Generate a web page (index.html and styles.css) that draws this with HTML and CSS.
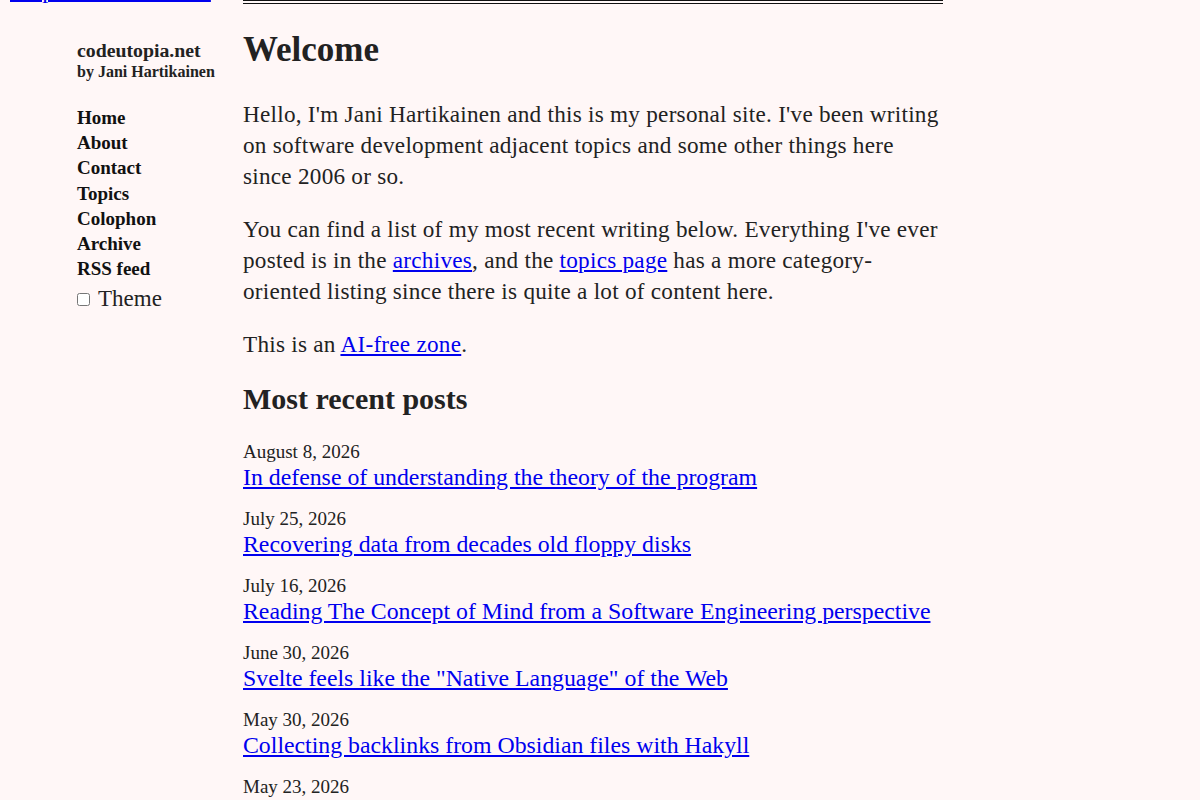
FILE: index.html
```html
<!DOCTYPE html>
<html lang="en">
<head>
<meta charset="utf-8">
<title>codeutopia.net</title>
<link rel="stylesheet" href="styles.css">
</head>
<body>
<a class="skip" href="#main">Skip to main content</a>
<div class="page">
  <aside class="sidebar">
    <div class="brand">
      <div class="site">codeutopia.net</div>
      <div class="by">by Jani Hartikainen</div>
    </div>
    <nav class="nav">
      <a href="#">Home</a>
      <a href="#">About</a>
      <a href="#">Contact</a>
      <a href="#">Topics</a>
      <a href="#">Colophon</a>
      <a href="#">Archive</a>
      <a href="#">RSS feed</a>
    </nav>
    <label class="theme"><input type="checkbox"> Theme</label>
  </aside>
  <main class="main" id="main">
    <h1>Welcome</h1>
    <p>Hello, I'm Jani Hartikainen and this is my personal site. I've been writing on software development adjacent topics and some other things here since 2006 or so.</p>
    <p>You can find a list of my most recent writing below. Everything I've ever posted is in the <a href="#">archives</a>, and the <a href="#">topics page</a> has a more category-oriented listing since there is quite a lot of content here.</p>
    <p>This is an <a href="#">AI-free zone</a>.</p>
    <h2>Most recent posts</h2>
    <ul class="posts">
      <li><div class="date">August 8, 2026</div><a href="#">In defense of understanding the theory of the program</a></li>
      <li><div class="date">July 25, 2026</div><a href="#">Recovering data from decades old floppy disks</a></li>
      <li><div class="date">July 16, 2026</div><a href="#">Reading The Concept of Mind from a Software Engineering perspective</a></li>
      <li><div class="date">June 30, 2026</div><a href="#">Svelte feels like the "Native Language" of the Web</a></li>
      <li><div class="date">May 30, 2026</div><a href="#">Collecting backlinks from Obsidian files with Hakyll</a></li>
      <li><div class="date">May 23, 2026</div><a href="#">Notes</a></li>
    </ul>
  </main>
</div>
</body>
</html>
```

FILE: styles.css
```css
html, body {
  margin: 0;
  padding: 0;
  background: #fff7f7;
  color: #222;
  font-family: "Liberation Serif", "Times New Roman", serif;
}
a { color: #0000ee; }
.skip {
  position: absolute;
  left: 10px;
  top: -21px;
  font-size: 24.2px;
  line-height: 22px;
  white-space: nowrap;
}
.page {
  display: flex;
  padding-left: 77px;
}
.sidebar {
  width: 166px;
  flex: none;
  padding-top: 38px;
}
.brand { margin-bottom: 23px; }
.site { font-weight: bold; font-size: 19.8px; line-height: 24px; }
.by { font-weight: bold; font-size: 16px; line-height: 20px; }
.nav { display: flex; flex-direction: column; }
.nav a {
  color: #111;
  text-decoration: none;
  font-weight: bold;
  font-size: 19px;
  line-height: 25.2px;
}
.theme {
  display: flex;
  align-items: center;
  font-size: 23px;
  line-height: 30px;
  margin-top: 3px;
}
.theme input { margin: 0 8px 0 0; width: 13px; height: 13px; }
.main {
  width: 700px;
  border-top: 4px double #111;
}
h1 {
  font-size: 35px;
  line-height: 40px;
  margin: 26px 0 29px;
}
p {
  font-size: 23.2px;
  letter-spacing: 0.25px;
  line-height: 31px;
  margin: 0 0 22px;
}
h2 {
  font-size: 30px;
  line-height: 34px;
  margin: 22px 0 24px;
}
.posts { list-style: none; padding: 0; margin: 0; }
.posts li { margin-bottom: 17px; }
.date { font-size: 19px; line-height: 24px; }
.posts a { font-size: 23.8px; line-height: 26px; }
```
